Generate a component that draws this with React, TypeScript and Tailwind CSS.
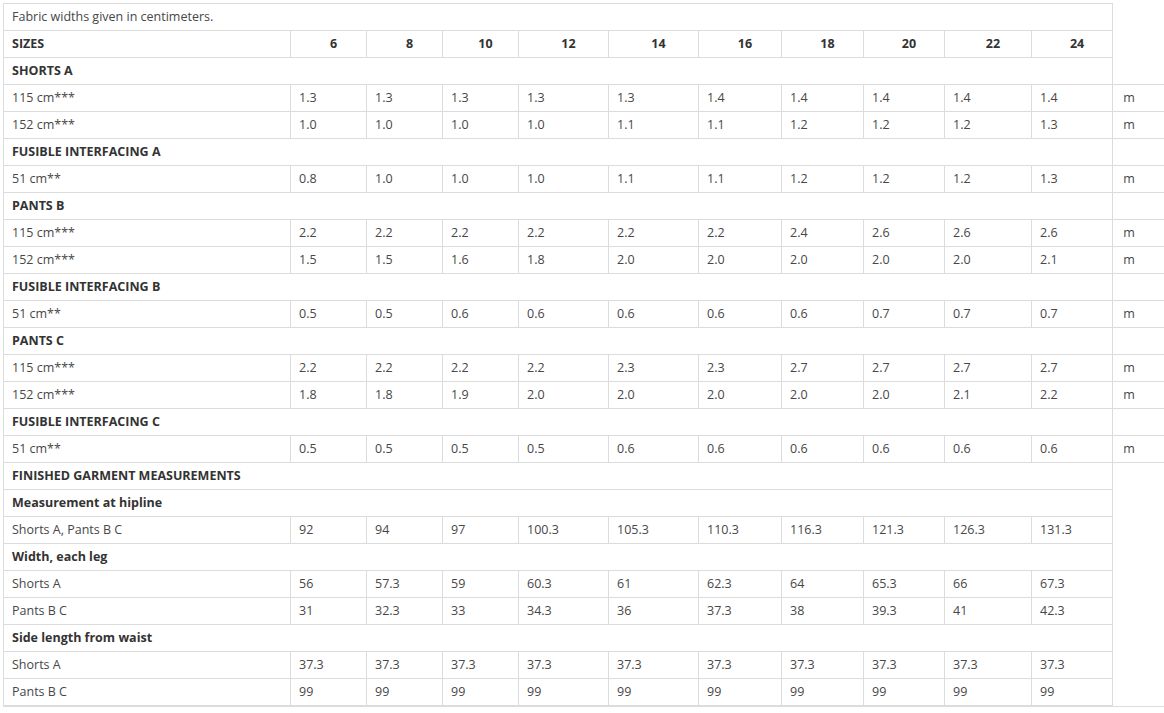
const SIZES = ["6", "8", "10", "12", "14", "16", "18", "20", "22", "24"];
const COL_WIDTHS = [287, 76, 76, 76, 90, 90, 83, 82, 81, 87, 81, 80];
const TABLE_WIDTH = COL_WIDTHS.reduce((a, b) => a + b, 0);

type Row =
  | { kind: "section"; label: string }
  | { kind: "data"; label: string; values: string[]; unit?: string };

const rows: Row[] = [
  { kind: "section", label: "SHORTS A" },
  { kind: "data", label: "115 cm***", values: ["1.3", "1.3", "1.3", "1.3", "1.3", "1.4", "1.4", "1.4", "1.4", "1.4"], unit: "m" },
  { kind: "data", label: "152 cm***", values: ["1.0", "1.0", "1.0", "1.0", "1.1", "1.1", "1.2", "1.2", "1.2", "1.3"], unit: "m" },
  { kind: "section", label: "FUSIBLE INTERFACING A" },
  { kind: "data", label: "51 cm**", values: ["0.8", "1.0", "1.0", "1.0", "1.1", "1.1", "1.2", "1.2", "1.2", "1.3"], unit: "m" },
  { kind: "section", label: "PANTS B" },
  { kind: "data", label: "115 cm***", values: ["2.2", "2.2", "2.2", "2.2", "2.2", "2.2", "2.4", "2.6", "2.6", "2.6"], unit: "m" },
  { kind: "data", label: "152 cm***", values: ["1.5", "1.5", "1.6", "1.8", "2.0", "2.0", "2.0", "2.0", "2.0", "2.1"], unit: "m" },
  { kind: "section", label: "FUSIBLE INTERFACING B" },
  { kind: "data", label: "51 cm**", values: ["0.5", "0.5", "0.6", "0.6", "0.6", "0.6", "0.6", "0.7", "0.7", "0.7"], unit: "m" },
  { kind: "section", label: "PANTS C" },
  { kind: "data", label: "115 cm***", values: ["2.2", "2.2", "2.2", "2.2", "2.3", "2.3", "2.7", "2.7", "2.7", "2.7"], unit: "m" },
  { kind: "data", label: "152 cm***", values: ["1.8", "1.8", "1.9", "2.0", "2.0", "2.0", "2.0", "2.0", "2.1", "2.2"], unit: "m" },
  { kind: "section", label: "FUSIBLE INTERFACING C" },
  { kind: "data", label: "51 cm**", values: ["0.5", "0.5", "0.5", "0.5", "0.6", "0.6", "0.6", "0.6", "0.6", "0.6"], unit: "m" },
  { kind: "section", label: "FINISHED GARMENT MEASUREMENTS" },
  { kind: "section", label: "Measurement at hipline" },
  { kind: "data", label: "Shorts A, Pants B C", values: ["92", "94", "97", "100.3", "105.3", "110.3", "116.3", "121.3", "126.3", "131.3"] },
  { kind: "section", label: "Width, each leg" },
  { kind: "data", label: "Shorts A", values: ["56", "57.3", "59", "60.3", "61", "62.3", "64", "65.3", "66", "67.3"] },
  { kind: "data", label: "Pants B C", values: ["31", "32.3", "33", "34.3", "36", "37.3", "38", "39.3", "41", "42.3"] },
  { kind: "section", label: "Side length from waist" },
  { kind: "data", label: "Shorts A", values: Array(10).fill("37.3") },
  { kind: "data", label: "Pants B C", values: Array(10).fill("99") },
];

const cell = "border border-[#dcdcdc] h-[27px] px-2 py-0 align-middle whitespace-nowrap";

export default function App() {
  return (
    <div
      className="w-[1164px] h-[713px] overflow-hidden bg-white text-[#474747] text-[12.5px]"
      style={{ fontFamily: '"Open Sans", "DejaVu Sans", sans-serif' }}
    >
      <div className="pl-[3px] pt-[3px] w-[1200px]">
        <table className="border-collapse table-fixed" style={{ width: TABLE_WIDTH }}>
          <colgroup>
            {COL_WIDTHS.map((w, i) => (
              <col key={i} style={{ width: w }} />
            ))}
          </colgroup>
          <tbody>
            <tr>
              <td colSpan={11} className={cell}>Fabric widths given in centimeters.</td>
            </tr>
            <tr>
              <td className={`${cell} font-bold text-[#333]`}>SIZES</td>
              {SIZES.map((s) => (
                <td key={s} className={`${cell} !pl-[18px] font-bold text-[#333] text-center`}>{s}</td>
              ))}
            </tr>
            {rows.map((r, i) =>
              r.kind === "section" ? (
                <tr key={i}>
                  <td colSpan={11} className={`${cell} font-bold text-[#333]`}>{r.label}</td>
                </tr>
              ) : (
                <tr key={i}>
                  <td className={cell}>{r.label}</td>
                  {r.values.map((v, j) => (
                    <td key={j} className={cell}>{v}</td>
                  ))}
                  {r.unit && <td className={`${cell} !pl-[10px]`}>{r.unit}</td>}
                </tr>
              )
            )}
          </tbody>
        </table>
        <div className="border-t border-[#dcdcdc] w-[1161px]" />
      </div>
    </div>
  );
}
